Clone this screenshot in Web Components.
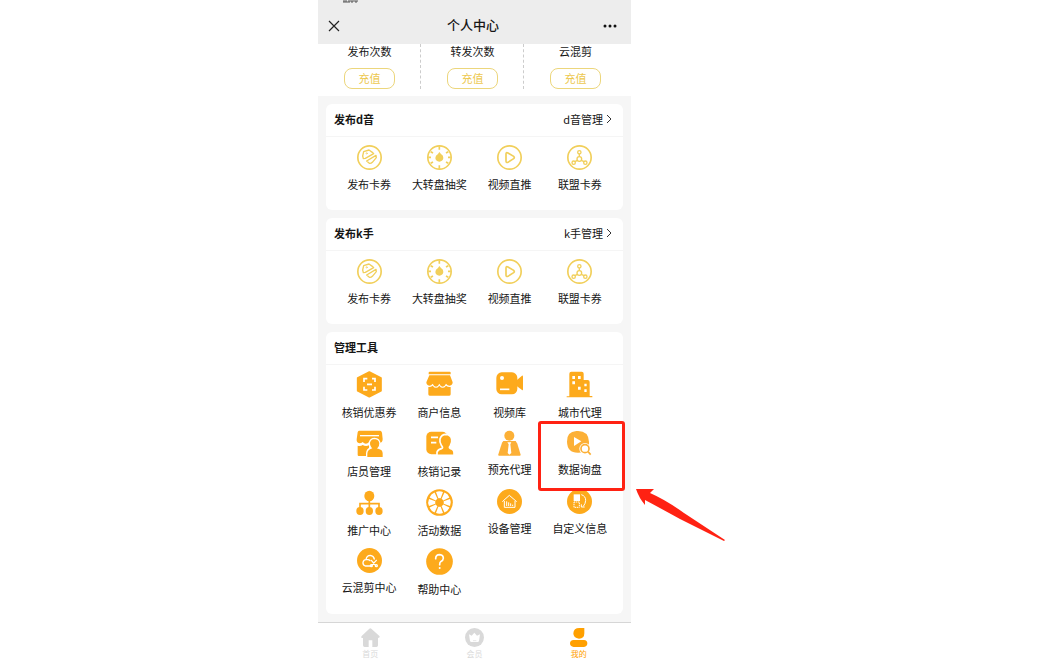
<!DOCTYPE html>
<html lang="zh-CN">
<head>
<meta charset="utf-8">
<title>个人中心</title>
<style>
body{margin:0;background:#fff;color:#161616;font-family:"Noto Sans CJK SC","Noto Sans",sans-serif;font-size:11px;line-height:16px}
</style>
</head>
<body>
<center-page></center-page>
<script>
const ICONS = {
  coupon: ['0 0 75 75', `<g fill="none" stroke="currentColor" stroke-linejoin="round" stroke-linecap="round"><circle cx="37.500" cy="37.500" r="35" stroke-width="5"/><g stroke-width="4"><path d="M25 40L19 41L17 33L20 20L36 15L46 22L50 26Z"/><path d="M29 48L57 31L58 38L46 52Q42 56 37 55Z"/></g><circle cx="29" cy="25" r="2" stroke-width="2"/></g>`],
  wheel: ['0 0 75 75', `<circle cx="37.500" cy="37.500" r="35" fill="none" stroke="currentColor" stroke-width="5"/><path d="M37 4V14M37 61V71M4 37H12M63 37H71M11 20L18 24M64 20L57 24M11 55L18 51M64 55L57 51" stroke="currentColor" stroke-width="5"/><path d="M37 21L42 27Q50 31 49 39Q48 49 37 50Q26 49 25 39Q25 31 33 27Z" fill="currentColor"/>`],
  play: ['0 0 75 75', `<circle cx="37.500" cy="37.500" r="35" fill="none" stroke="currentColor" stroke-width="5"/><path d="M27 27Q27 21 33 24L50 34Q54 38 50 41L33 52Q27 54 27 48Z" fill="none" stroke="currentColor" stroke-width="5"/>`],
  union: ['0 0 75 75', `<g fill="none" stroke="currentColor" stroke-width="4"><circle cx="37.500" cy="37.500" r="35" stroke-width="5"/><circle cx="37" cy="22" r="5"/><circle cx="37" cy="42" r="7"/><circle cx="20" cy="53" r="5"/><circle cx="55" cy="53" r="5"/><path d="M37 27V35M31 46L24 50M43 46L51 50"/></g>`],
  verify: ['0 0 81 81', `<path d="M40 3L75 21V59L40 77L5 59V21Z" fill="currentColor" stroke="currentColor" stroke-width="5" stroke-linejoin="round"/><path d="M24 33V23H34M48 23H57V33M57 47V57H48M34 57H24V47M33 40H48" fill="none" stroke="#fff" stroke-width="5"/>`],
  shop: ['0 0 81 81', `<g fill="currentColor"><path d="M11 2H71Q74 2 74 5V10H8V5Q8 2 11 2Z"/><path d="M10 13H72L80 34Q80 43 71 44Q64 44 60 38Q56 47 50 47Q44 47 40 38Q36 47 30 47Q24 47 20 38Q16 44 10 44Q1 43 1 34Z"/><path d="M7 48Q14 49 20 44Q30 57 40 44Q50 57 60 44Q66 49 74 48V70Q74 74 70 74H11Q7 74 7 70Z"/></g>`],
  video: ['0 0 81 81', `<g fill="currentColor"><rect x="1" y="4" width="63" height="66" rx="16"/><path d="M62 28L78 14Q81 13 81 17V55Q81 59 78 57L62 45Z"/></g><circle cx="18" cy="21" r="6" fill="#fff"/><path d="M12 55H40" stroke="#fff" stroke-width="5"/>`],
  city: ['0 0 81 81', `<path d="M10 76V8Q10 2 16 2H47Q53 2 53 8V27H65Q71 27 71 33V75H79V79H2V76Z" fill="currentColor"/><path d="M19 15H27V24H19ZM36 15H44V24H36ZM19 31H27V40H19ZM55 38H62V46H55ZM36 47H44V56H36ZM55 55H62V63H55Z" fill="#fff"/>`],
  staff: ['0 0 81 81', `<path d="M9 2H73Q77 3 78 8L80 27Q80 39 69 39H64Q60 33 55 38Q46 45 40 36Q29 47 20 36Q16 40 10 40Q1 38 2 28L5 7Q6 2 9 2ZM5 47Q14 49 20 45Q29 50 39 46V78H8Q5 78 5 74Z" fill="currentColor"/><path d="M12 17H69" stroke="#fff" stroke-width="4"/><path d="M32 83V70Q33 57 45 54Q39 48 40 38Q43 25 56 25Q70 26 72 40Q72 49 67 54Q82 57 82 70V83Z" fill="currentColor" stroke="#fff" stroke-width="4"/>`],
  record: ['0 0 81 81', `<rect x="1" y="5" width="63" height="68" rx="15" fill="currentColor"/><path d="M15 22H36M15 38H31" stroke="#fff" stroke-width="5"/><path d="M33 76V66Q36 58 48 55Q52 52 46 46Q40 36 42 27Q46 13 60 13Q74 14 77 27Q79 37 73 47Q68 53 72 55Q84 58 84 68V76Z" fill="currentColor" stroke="#fff" stroke-width="5"/>`],
  agent: ['0 0 75 75', `<circle cx="37" cy="17" r="15" fill="currentColor"/><path d="M19 33H56L61 41L71 74Q71 77 68 77H6Q3 77 4 73L15 38Z" fill="currentColor"/><path d="M31 37H43L40 43L43 69L37 74L32 69L35 43Z" fill="#fff"/>`],
  query: ['0 0 75 75', `<path d="M28 3Q64 0 66 35Q68 67 34 68Q1 69 0 35Q-1 5 28 3Z" fill="currentColor"/><path d="M21 21V48L43 34Z" fill="#fff"/><circle cx="54" cy="56" r="17" fill="#fff"/><path d="M64 67L70 73" stroke="#fff" stroke-width="10"/><circle cx="54" cy="56" r="12" fill="#fff" stroke="currentColor" stroke-width="5"/><path d="M63 65L71 74" stroke="currentColor" stroke-width="5"/>`],
  org: ['0 0 81 81', `<ellipse cx="40" cy="21" rx="15" ry="16" fill="currentColor"/><path d="M40 35V60M12 60V44H69V60" fill="none" stroke="currentColor" stroke-width="5"/><g fill="currentColor"><ellipse cx="12" cy="66" rx="11" ry="12"/><ellipse cx="40" cy="66" rx="11" ry="12"/><ellipse cx="69" cy="66" rx="11" ry="12"/></g>`],
  activity: ['0 0 81 81', `<circle cx="40.500" cy="40.500" r="40" fill="currentColor"/><g fill="#fff">${[0,45,90,135,180,225,270,315].map(a=>`<path transform="rotate(${a} 40.500 40.500)" d="M37 28L30 9Q40 4 51 9L44 28Z"/>`).join('')}</g><circle cx="40.500" cy="40.500" r="11" fill="currentColor"/>`],
  device: ['0 0 75 75', `<circle cx="37.500" cy="37.500" r="37.500" fill="currentColor"/><path d="M16 38L37 19L59 38M22 36V55H54V36M29 51V37M35 51V40M41 51V43M47 51V47" fill="none" stroke="#fff" stroke-width="3"/>`],
  custom: ['0 0 75 75', `<circle cx="37.500" cy="37.500" r="37.500" fill="currentColor"/><rect x="20" y="16" width="19" height="20" fill="#fff"/><g fill="none" stroke="#fff" stroke-width="3"><rect x="21" y="39" width="16" height="16" stroke-dasharray="4 2"/><path d="M43 17Q56 21 56 34Q56 43 49 52M43 46V54H53"/></g>`],
  cloud: ['0 0 75 75', `<circle cx="37.500" cy="37.500" r="37.500" fill="currentColor"/><g fill="none" stroke="#fff" stroke-width="4" stroke-linecap="round"><path d="M38 54H25Q17 51 18 43Q20 35 27 35Q29 22 40 22Q50 23 52 33M30 35Q36 34 39 38"/><path d="M43 37L56 52M58 37L44 52" stroke-width="4"/><circle cx="43" cy="53" r="3"/><circle cx="58" cy="53" r="3"/></g>`],
  help: ['0 0 81 81', `<circle cx="40.500" cy="40.500" r="40" fill="currentColor"/><path d="M29 32Q29 20 41 20Q52 21 52 31Q52 37 44 41Q41 43 41 50" fill="none" stroke="#fff" stroke-width="5" stroke-linecap="round"/><circle cx="41" cy="60" r="3" fill="#fff"/>`],
  home: ['0 0 57 57', `<path d="M25 2Q28 0 31 2L56 25Q57 30 51 30V52Q51 57 46 57H34V37H23V57H11Q6 57 6 52V30H2Q-1 27 2 24Z" fill="currentColor"/>`],
  member: ['0 0 57 57', `<circle cx="28.500" cy="28.500" r="28.500" fill="currentColor"/><path d="M12 19L20 23L28 14L36 23L45 19L42 39Q41 42 38 42H20Q16 42 15 39Z" fill="#fff"/><path d="M24 38H34" stroke="currentColor" stroke-width="2"/>`],
  mine: ['0 0 57 57', `<path d="M46 0V16Q46 32 30 32Q13 31 13 16Q14 0 31 0ZM14 36H45Q55 37 55 46Q55 56 45 57H14Q3 56 3 46Q3 37 14 36Z" fill="currentColor"/>`]
};

class Base extends HTMLElement {
  connectedCallback() {
    if (!this.shadowRoot) this.attachShadow({mode: 'open'}).innerHTML = this.render();
  }
}

customElements.define('app-icon', class extends Base {
  render() {
    const [box, art] = ICONS[this.getAttribute('name')];
    return `<style>:host{display:block;width:27px;height:27px}:host([size=small]){width:25px;height:25px}:host([size=tab]){width:19px;height:19px}svg{display:block;width:100%;height:100%;overflow:visible}</style>
    <svg viewBox="${box}" aria-hidden="true">${art}</svg>`;
  }
});

customElements.define('page-header', class extends Base {
  render() {
    return `<style>
      :host{display:grid;grid-template-columns:1fr auto 1fr;align-items:center;position:relative;height:44px;padding:8px 13px 0 10px;box-sizing:border-box;background:#ededed}
      h1{margin:0;font-size:13px;font-weight:500;line-height:18px;padding-bottom:2px}
      button{border:0;background:none;padding:0;color:inherit;display:block}
      button:last-of-type{justify-self:end}
      svg{display:block}
      .status{position:absolute;left:25px;top:0}
    </style>
    <svg class="status" width="15" height="3" aria-hidden="true"><path d="M0 2H7M1 0V2M3 0V2M6 0V2M8 0V2H10V0M12 0V2H14V0" stroke="#555" fill="none"/></svg>
    <button aria-label="关闭"><svg width="12" height="12" viewBox="0 0 12 12"><path d="M1 1L11 11M11 1L1 11" stroke="#222" stroke-width="1.200"/></svg></button>
    <h1><slot></slot></h1>
    <button aria-label="更多"><svg width="16" height="4" viewBox="0 0 16 4"><g fill="#111"><circle cx="3" cy="2" r="1.500"/><circle cx="8" cy="2" r="1.500"/><circle cx="13" cy="2" r="1.500"/></g></svg></button>`;
  }
});

customElements.define('quota-item', class extends Base {
  render() {
    return `<style>
      :host{display:flex;flex-direction:column;align-items:center;gap:10px;flex:1;line-height:14px;position:relative}
      :host(:not(:last-child))::after{content:"";position:absolute;right:0;top:0;bottom:0;border-right:1px dashed #ccc}
      button{box-sizing:border-box;width:51px;height:21px;border:1px solid #ecd67c;border-radius:8px;background:#fff;color:#edc84f;font:inherit;line-height:18px;padding:0 0 1px}
    </style><span><slot></slot></span><button>充值</button>`;
  }
});

customElements.define('quota-bar', class extends Base {
  render() {
    return `<style>:host{display:flex;padding:0 4px 7px 0;background:#fff}</style><slot></slot>`;
  }
});

customElements.define('call-out', class extends Base {
  render() {
    return `<style>
      :host{position:absolute;inset:-9px -10px -12px -7px;border:3px solid #ff2213;border-radius:3px;pointer-events:none;z-index:1}
      svg{position:absolute;left:calc(100% + 14px);top:calc(100% + 1px);width:90px;height:53px}
    </style><svg viewBox="0 0 90 53" aria-hidden="true"><path d="M0 0H18L14 4Q30 11 48 24L89 51L88 52L44 30Q24 19 9 11V16Q3 9 0 0Z" fill="#ff2213"/></svg>`;
  }
});

customElements.define('tool-tile', class extends Base {
  render() {
    const size = this.hasAttribute('small') ? 'size="small"' : '';
    return `<style>
      :host{display:block;position:relative}
      a{display:flex;flex-direction:column;align-items:center;gap:6px;color:inherit;text-decoration:none;white-space:nowrap}
      app-icon{color:var(--tile-color,#fdaa1c)}
    </style><a href="#"><app-icon name="${this.getAttribute('icon')}" ${size}></app-icon><span><slot></slot></span></a><slot name="note"></slot>`;
  }
});

customElements.define('menu-card', class extends Base {
  render() {
    const more = this.getAttribute('more');
    return `<style>
      :host{display:block;background:#fff;border-radius:6px;--tile-color:#f1cf5a;--grid-pad:8px 8px 18px}
      :host([solid]){--tile-color:#fdaa1c;--grid-pad:6px 8px 17px}
      header{box-sizing:border-box;display:flex;justify-content:space-between;align-items:center;height:33px;padding:0 11px 2px 8px;border-bottom:1px solid #f5f5f5}
      h2{margin:0;font-size:11px;font-weight:700}
      a{display:flex;align-items:center;gap:3px;color:inherit;text-decoration:none}
      svg{display:block}
      .grid{display:grid;grid-template-columns:repeat(4,1fr);row-gap:10px;padding:var(--grid-pad)}
    </style>
    <header><h2>${this.getAttribute('heading')}</h2>${more ? `<a href="#">${more}<svg width="6" height="10" viewBox="0 0 6 10" aria-hidden="true"><path d="M1 1L5 5L1 9" fill="none" stroke="#333"/></svg></a>` : ''}</header>
    <div class="grid"><slot></slot></div>`;
  }
});

customElements.define('tab-item', class extends Base {
  render() {
    return `<style>
      :host{display:block;flex:1;color:#d9d9d9}
      :host([active]){color:#ffa000}
      a{display:flex;flex-direction:column;align-items:center;gap:1px;color:inherit;text-decoration:none;font-size:8px;line-height:12px}
    </style><a href="#"><app-icon size="tab" name="${this.getAttribute('icon')}"></app-icon><span><slot></slot></span></a>`;
  }
});

customElements.define('tab-bar', class extends Base {
  render() {
    return `<style>:host{display:block}nav{display:flex;padding:5px 0 11px;border-top:1px solid #d6d6d6;background:#fff}</style><nav><slot></slot></nav>`;
  }
});

customElements.define('center-page', class extends Base {
  render() {
    const publish = `<tool-tile small icon="coupon">发布卡券</tool-tile><tool-tile small icon="wheel">大转盘抽奖</tool-tile><tool-tile small icon="play">视频直推</tool-tile><tool-tile small icon="union">联盟卡券</tool-tile>`;
    return `<style>
      :host{display:grid;grid-template-columns:318fr 313fr 416fr}
      .panel{grid-column:2;min-width:0}
      main{display:flex;flex-direction:column;gap:8px;padding:8px;background:#f6f6f6}
      .soft{--tile-color:#fcb036}
    </style>
    <div class="panel">
      <page-header>个人中心</page-header>
      <quota-bar><quota-item>发布次数</quota-item><quota-item>转发次数</quota-item><quota-item>云混剪</quota-item></quota-bar>
      <main>
        <menu-card heading="发布d音" more="d音管理">${publish}</menu-card>
        <menu-card heading="发布k手" more="k手管理">${publish}</menu-card>
        <menu-card solid heading="管理工具">
          <tool-tile icon="verify">核销优惠券</tool-tile>
          <tool-tile icon="shop">商户信息</tool-tile>
          <tool-tile icon="video">视频库</tool-tile>
          <tool-tile icon="city">城市代理</tool-tile>
          <tool-tile icon="staff">店员管理</tool-tile>
          <tool-tile icon="record">核销记录</tool-tile>
          <tool-tile class="soft" small icon="agent">预充代理</tool-tile>
          <tool-tile class="soft" small icon="query">数据询盘<call-out slot="note"></call-out></tool-tile>
          <tool-tile icon="org">推广中心</tool-tile>
          <tool-tile icon="activity">活动数据</tool-tile>
          <tool-tile small icon="device">设备管理</tool-tile>
          <tool-tile small icon="custom">自定义信息</tool-tile>
          <tool-tile small icon="cloud">云混剪中心</tool-tile>
          <tool-tile icon="help">帮助中心</tool-tile>
        </menu-card>
      </main>
      <tab-bar><tab-item icon="home">首页</tab-item><tab-item icon="member">会员</tab-item><tab-item icon="mine" active>我的</tab-item></tab-bar>
    </div>`;
  }
});
</script>
</body>
</html>
